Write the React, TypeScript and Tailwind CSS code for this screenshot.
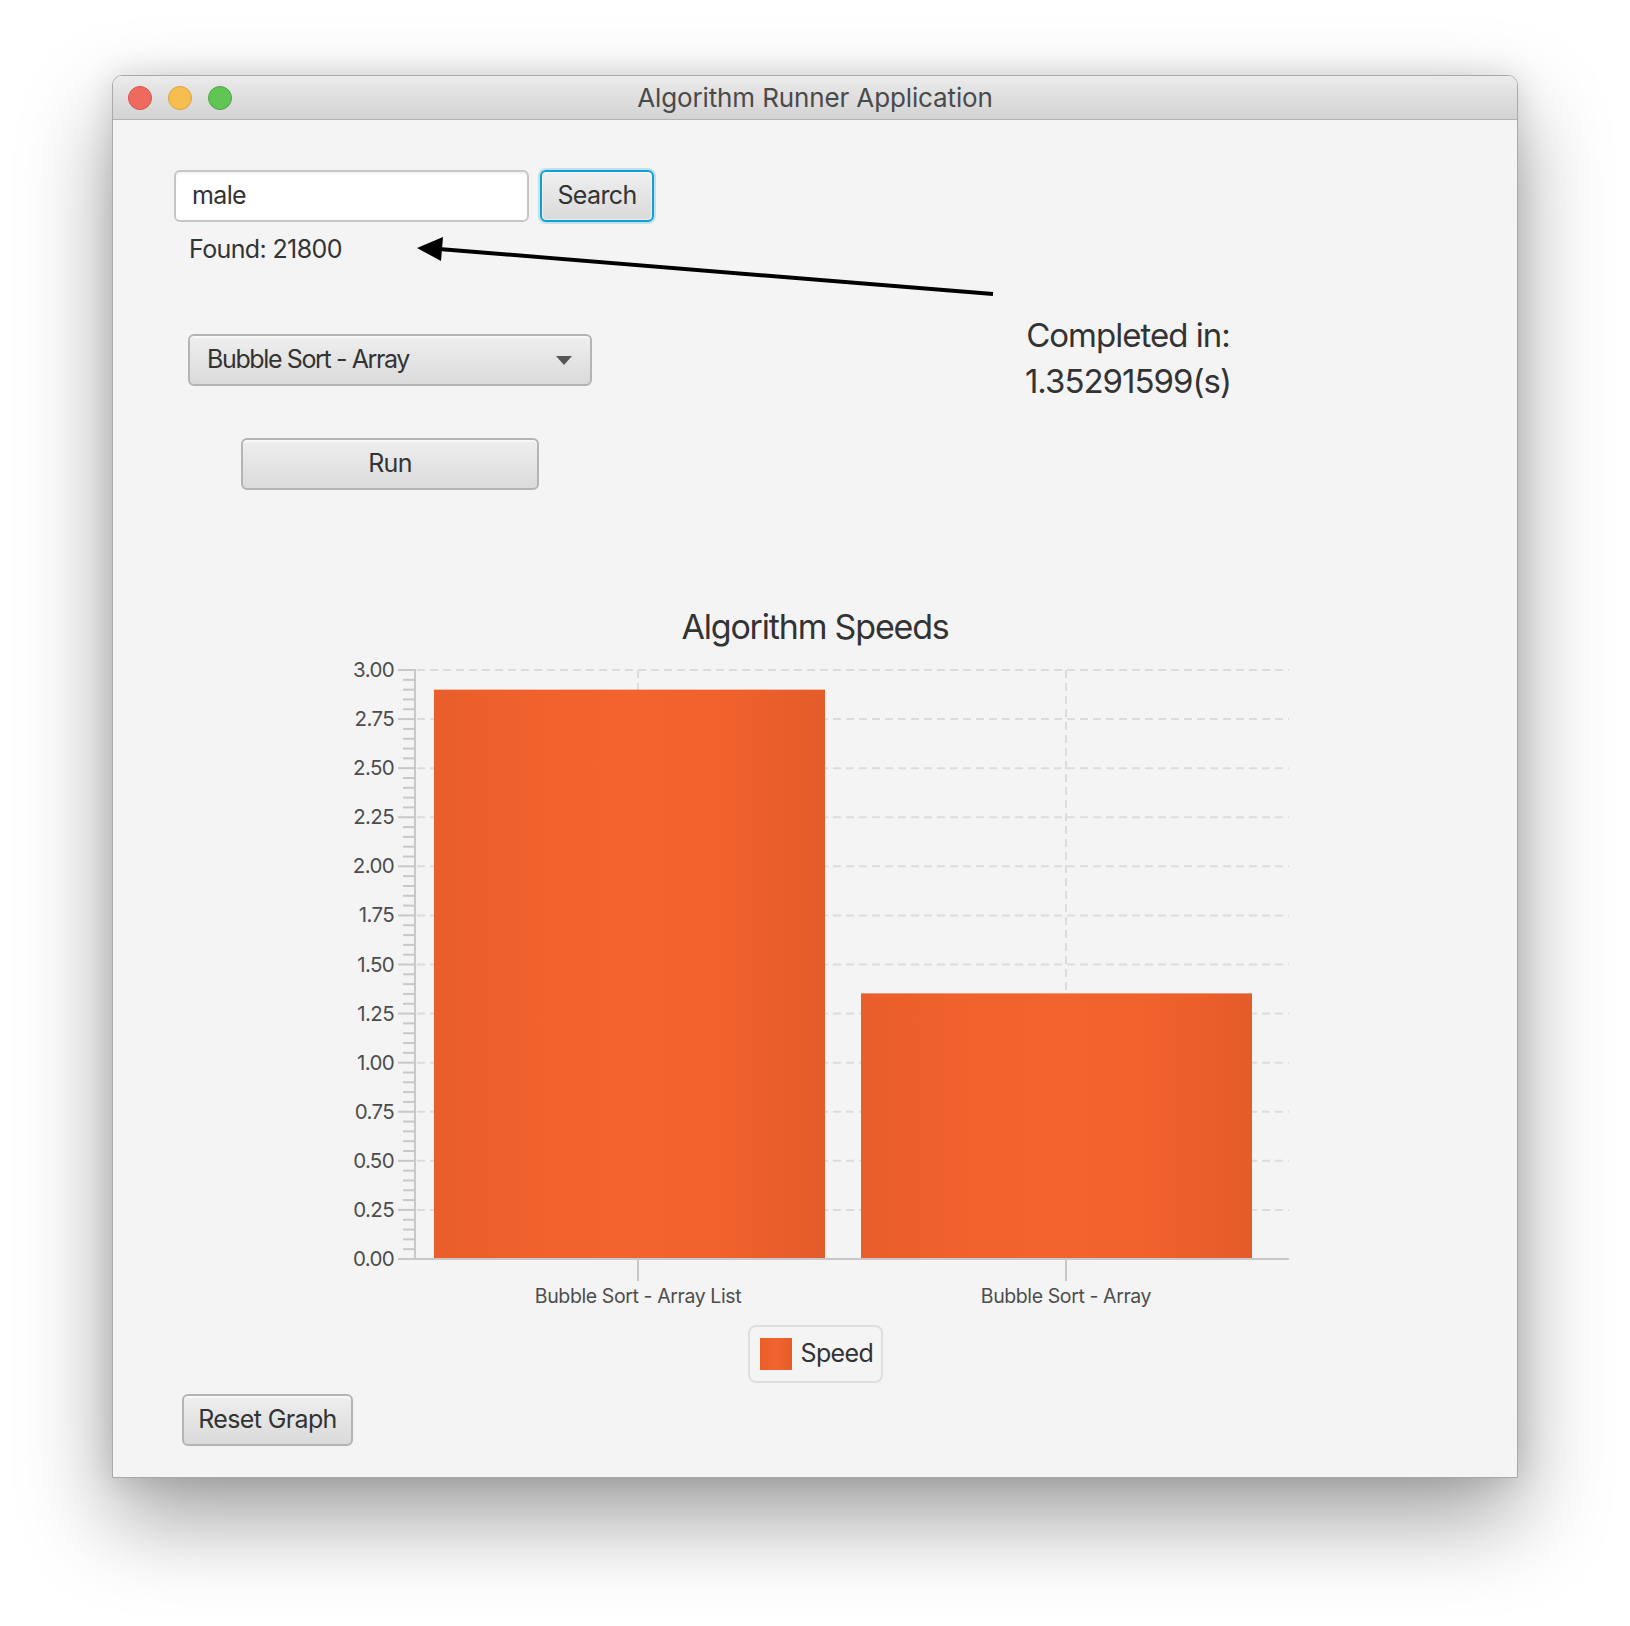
import React from 'react'

const TICKS = [0, 0.25, 0.5, 0.75, 1, 1.25, 1.5, 1.75, 2, 2.25, 2.5, 2.75, 3]
const bars = [
  { label: 'Bubble Sort - Array List', value: 2.9, x: 104, center: 308 },
  { label: 'Bubble Sort - Array', value: 1.35291599, x: 531, center: 736 },
]

// value -> svg y
const yOf = (v: number) => 603 - v * 196.33

function SpeedChart() {
  const minor: number[] = []
  for (let i = 0; i <= 60; i++) if (i % 5 !== 0) minor.push(i * 0.05)

  return (
    <svg width="970" height="660" viewBox="0 0 970 660" className="block mx-auto">
      <defs>
        <linearGradient id="barFill" x1="0" x2="1" y1="0" y2="0">
          <stop offset="0%" stopColor="#e95e2b" />
          <stop offset="25%" stopColor="#f0612c" />
          <stop offset="50%" stopColor="#f3632e" />
          <stop offset="75%" stopColor="#f0612c" />
          <stop offset="100%" stopColor="#e45c2a" />
        </linearGradient>
      </defs>

      {/* grid */}
      {TICKS.slice(1).map((t) => (
        <line key={t} x1="87" x2="959" y1={yOf(t)} y2={yOf(t)} stroke="#dcdcdc" strokeWidth="2" strokeDasharray="8 5" />
      ))}
      {bars.map((b) => (
        <line key={b.label} x1={b.center} x2={b.center} y1={yOf(3)} y2="603" stroke="#dcdcdc" strokeWidth="2" strokeDasharray="8 5" />
      ))}

      {/* bars */}
      {bars.map((b) => (
        <rect key={b.label} x={b.x} y={yOf(b.value)} width="391" height={603 - yOf(b.value)} fill="url(#barFill)" />
      ))}

      {/* y axis */}
      <line x1="85" x2="85" y1={yOf(3) - 1} y2="604" stroke="#c8c8c8" strokeWidth="2" />
      {minor.map((m) => (
        <line key={m} x1="73" x2="85" y1={yOf(m)} y2={yOf(m)} stroke="#c8c8c8" strokeWidth="2" />
      ))}
      {TICKS.map((t) => (
        <g key={t}>
          <line x1="68" x2="85" y1={yOf(t)} y2={yOf(t)} stroke="#c8c8c8" strokeWidth="2" />
          <text x="64" y={yOf(t) + 7} textAnchor="end" fontSize="20.5" fill="#4d4d4d" fontFamily="Inter, sans-serif">
            {t.toFixed(2)}
          </text>
        </g>
      ))}

      {/* x axis */}
      <line x1="68" x2="959" y1="603" y2="603" stroke="#c8c8c8" strokeWidth="2" />
      {bars.map((b) => (
        <g key={b.label}>
          <line x1={b.center} x2={b.center} y1="603" y2="625" stroke="#c8c8c8" strokeWidth="2" />
          <text x={b.center} y="647" textAnchor="middle" fontSize="19.5" letterSpacing="-0.4" fill="#4d4d4d" fontFamily="Inter, sans-serif">
            {b.label}
          </text>
        </g>
      ))}
    </svg>
  )
}

function Btn({ children, className = '' }: { children: React.ReactNode; className?: string }) {
  return (
    <button
      className={`h-[52px] rounded-[6px] border-2 border-[#b4b4b4] bg-linear-to-b from-[#efefef] to-[#dadada] text-[25px] text-[#333] shadow-[inset_0_2px_0_rgba(255,255,255,0.6)] ${className}`}
    >
      {children}
    </button>
  )
}

export default function App() {
  return (
    <div className="w-[1630px] min-h-[1626px] bg-white pt-[75px] pl-[112px] font-[Inter,sans-serif] tracking-[-0.04em]">
      <div className="w-[1406px] h-[1403px] flex flex-col rounded-t-[10px] border border-[#a9a9a9] shadow-[0_40px_90px_rgba(0,0,0,0.38),0_0_30px_rgba(0,0,0,0.12)] overflow-hidden">
        {/* title bar */}
        <div className="relative h-[44px] flex items-center px-[15px] gap-[16px] bg-linear-to-b from-[#ebebeb] to-[#d3d3d3] border-b border-[#b3b3b3]">
          <span className="w-[24px] h-[24px] rounded-full bg-[#ee6a5f] border border-[#d9544a]" />
          <span className="w-[24px] h-[24px] rounded-full bg-[#f5be4f] border border-[#dba23b]" />
          <span className="w-[24px] h-[24px] rounded-full bg-[#61c554] border border-[#4ea53f]" />
          <div className="absolute inset-0 flex items-center justify-center text-[26px] tracking-[-0.005em] text-[#4a4a4a]">
            Algorithm Runner Application
          </div>
        </div>

        {/* content */}
        <div className="relative flex-1 bg-[#f4f4f4] flex flex-col text-[#333]">
          <div className="flex pl-[61px] pt-[50px]">
            <div className="w-[480px] flex flex-col">
              <div className="flex gap-[11px]">
                <div className="w-[355px] h-[52px] rounded-[6px] border-2 border-[#c6c6c6] bg-white shadow-[inset_0_2px_2px_rgba(0,0,0,0.05)] flex items-center pl-[16px] text-[25px]">
                  male
                </div>
                <button className="w-[114px] h-[52px] rounded-[6px] border-2 border-[#0f9ed8] bg-linear-to-b from-[#efefef] to-[#dadada] text-[25px] text-[#333] shadow-[0_0_0_2px_rgba(15,158,216,0.22),inset_0_0_0_1px_rgba(255,255,255,0.5)]">
                  Search
                </button>
              </div>
              <div className="mt-[12px] pl-[15px] h-[30px] leading-[30px] text-[25px] tracking-[-0.025em]">Found: 21800</div>
              <div className="mt-[70px] ml-[14px] w-[404px] h-[52px] rounded-[6px] border-2 border-[#b4b4b4] bg-linear-to-b from-[#efefef] to-[#dadada] shadow-[inset_0_2px_0_rgba(255,255,255,0.6)] flex items-center justify-between pl-[17px] pr-[18px] text-[25px] tracking-[-0.055em]">
                <span>Bubble Sort - Array</span>
                <svg width="16" height="9" viewBox="0 0 16 9">
                  <path d="M0 0 H16 L8 9 Z" fill="#555" />
                </svg>
              </div>
              <Btn className="mt-[52px] ml-[67px] w-[298px]">Run</Btn>
            </div>
            <div className="ml-[344px] mt-[142px] w-[260px] text-center text-[33px] leading-[46px] tracking-[-0.03em]">
              <div>Completed in:</div>
              <div>1.35291599(s)</div>
            </div>
          </div>

          <div className="mt-[115px] h-[44px] leading-[44px] text-center text-[34px] tracking-[-0.035em]">Algorithm Speeds</div>

          <div className="mt-[7px]">
            <SpeedChart />
          </div>

          <div className="mt-[9px] self-center w-[135px] h-[58px] rounded-[8px] border-2 border-[#dedede] flex items-center pl-[10px] gap-[9px] text-[25px]">
            <span className="w-[32px] h-[32px] bg-linear-to-r from-[#e95e2b] via-[#f3632e] to-[#e45c2a]" />
            <span>Speed</span>
          </div>

          <Btn className="mt-[11px] ml-[69px] w-[171px] self-start">Reset Graph</Btn>

          {/* annotation arrow */}
          <svg className="absolute left-0 top-0 pointer-events-none" width="1000" height="200" viewBox="0 0 1000 200">
            <line x1="880" y1="174" x2="326" y2="129" stroke="#000" strokeWidth="4" />
            <path d="M304 128 L330 117 L328 141 Z" fill="#000" />
          </svg>
        </div>
      </div>
    </div>
  )
}
